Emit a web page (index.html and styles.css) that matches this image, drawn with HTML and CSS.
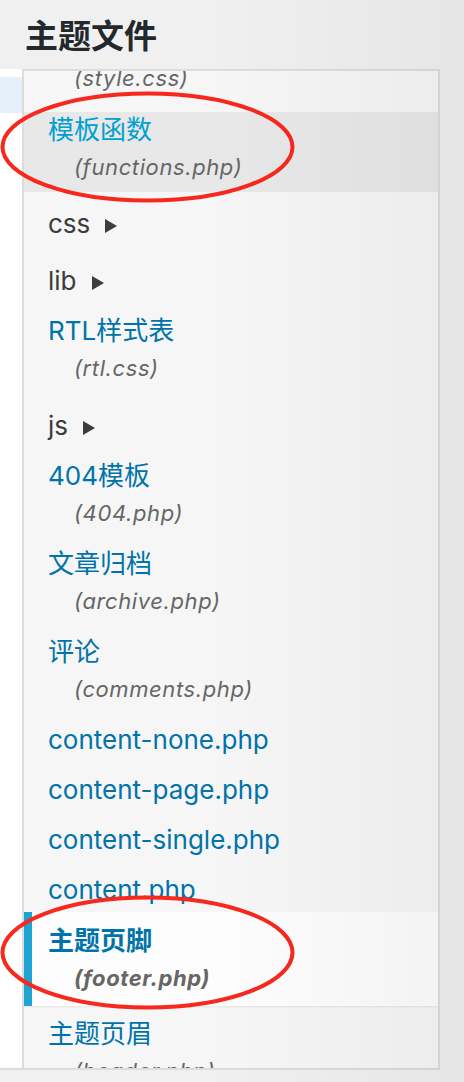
FILE: index.html
```html
<!DOCTYPE html>
<html lang="zh-CN">
<head>
<meta charset="utf-8">
<title>主题文件</title>
<link rel="stylesheet" href="styles.css">
</head>
<body>
<div class="page">
  <h2 class="title">主题文件</h2>
  <div class="body-row">
    <div class="editor-edge"><div class="edge-highlight"></div></div>
    <div class="templateside">
      <ul class="files">
        <li class="item"><span class="name">样式表</span><span class="note">(style.css)</span></li>
        <li class="item hover"><span class="name">模板函数</span><span class="note">(functions.php)</span></li>
        <li class="item folder"><span class="folder-label">css<span class="tri"></span></span></li>
        <li class="item folder"><span class="folder-label">lib<span class="tri"></span></span></li>
        <li class="item"><span class="name">RTL样式表</span><span class="note">(rtl.css)</span></li>
        <li class="item folder"><span class="folder-label">js<span class="tri"></span></span></li>
        <li class="item"><span class="name">404模板</span><span class="note">(404.php)</span></li>
        <li class="item"><span class="name">文章归档</span><span class="note">(archive.php)</span></li>
        <li class="item"><span class="name">评论</span><span class="note">(comments.php)</span></li>
        <li class="item"><span class="name">content-none.php</span></li>
        <li class="item"><span class="name">content-page.php</span></li>
        <li class="item"><span class="name">content-single.php</span></li>
        <li class="item"><span class="name">content.php</span></li>
        <li class="item current"><span class="name">主题页脚</span><span class="note">(footer.php)</span></li>
        <li class="item"><span class="name">主题页眉</span><span class="note">(header.php)</span></li>
      </ul>
    </div>
  </div>
</div>
<svg class="marks" width="464" height="1082" viewBox="0 0 464 1082" aria-hidden="true">
  <ellipse cx="147.5" cy="147" rx="145" ry="53.5" fill="none" stroke="#f7281c" stroke-width="4"/>
  <ellipse cx="147.5" cy="952.5" rx="145" ry="55" fill="none" stroke="#f7281c" stroke-width="4"/>
</svg>
</body>
</html>
```
FILE: styles.css
```css
* { box-sizing: border-box; }
html, body { margin: 0; padding: 0; }
body {
  width: 464px;
  height: 1082px;
  overflow: hidden;
  position: relative;
  background: #f0f0f0;
  font-family: Inter, "Noto Sans CJK SC", sans-serif;
}
body::after {
  content: "";
  position: absolute;
  inset: 0;
  pointer-events: none;
  background: linear-gradient(to right, rgba(0,0,0,0) 45%, rgba(0,0,0,0.045) 100%);
}
.page { display: flex; flex-direction: column; }
.title {
  margin: 0;
  height: 69px;
  padding: 4px 0 0 25px;
  font-size: 33px;
  line-height: 65px;
  font-weight: 700;
  color: #23282d;
}
.body-row { display: flex; height: 1001px; }
.editor-edge {
  width: 22px;
  background: #fff;
  border-bottom: 2px solid #dcdcdc;
  padding-top: 8px;
}
.edge-highlight { height: 36px; background: #e6f0fb; }
.templateside {
  width: 418px;
  border: 2px solid #dcdcdc;
  background: #f6f6f6;
  overflow: hidden;
}
.files { list-style: none; margin: -55px 0 0; padding: 0; }
.item { padding: 7px 0 7px 24px; font-size: 26px; }
.name { display: block; line-height: 36px; color: #0073aa; }
.note {
  display: block;
  padding-left: 26px;
  font-size: 22px;
  font-style: italic;
  letter-spacing: 0.6px;
  line-height: 38px;
  color: #666;
}
.item.hover { background: #e8e8e8; padding-top: 0; padding-bottom: 6px; margin-top: 8px; }
.item.hover .name { color: #00a0d2; }
.item.folder { margin-top: 7px; }
.folder-label { display: block; line-height: 36px; color: #3c3c3c; }
.tri {
  display: inline-block;
  width: 0;
  height: 0;
  margin-left: 15px;
  border-left: 12px solid #3c3c3c;
  border-top: 7.5px solid transparent;
  border-bottom: 7.5px solid transparent;
  vertical-align: middle;
}
.item.current {
  background: #fdfdfd;
  border-left: 8px solid #1ea4d3;
  padding: 11px 0 9px 16px;
  margin-top: -3px;
  margin-bottom: 3px;
  box-shadow: 0 1px 2px rgba(0,0,0,0.08);
  position: relative;
}
.item.current .name { font-weight: 700; }
.item.current .note { font-weight: 700; }
.marks { position: absolute; left: 0; top: 0; pointer-events: none; }
```
